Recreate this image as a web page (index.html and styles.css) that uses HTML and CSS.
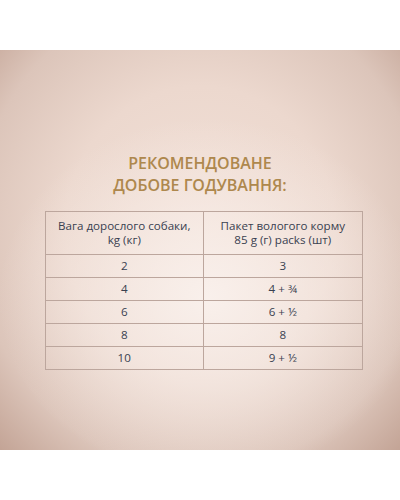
FILE: index.html
```html
<!DOCTYPE html>
<html lang="uk">
<head>
<meta charset="utf-8">
<link rel="stylesheet" href="styles.css">
</head>
<body>
<div class="banner">
  <h1 class="title">РЕКОМЕНДОВАНЕ<br>ДОБОВЕ ГОДУВАННЯ:</h1>
  <table class="feed">
    <tr class="head">
      <td>Вага дорослого собаки,<br>kg (кг)</td>
      <td>Пакет вологого корму<br>85 g (г) packs (шт)</td>
    </tr>
    <tr><td>2</td><td>3</td></tr>
    <tr><td>4</td><td>4 + ¾</td></tr>
    <tr><td>6</td><td>6 + ½</td></tr>
    <tr><td>8</td><td>8</td></tr>
    <tr><td>10</td><td>9 + ½</td></tr>
  </table>
</div>
</body>
</html>
```
FILE: styles.css
```css
html, body {
  margin: 0;
  padding: 0;
  background: #ffffff;
}
body {
  width: 400px;
  height: 500px;
  font-family: "Open Sans", "Noto Sans", sans-serif;
}
.banner {
  margin-top: 50px;
  height: 400px;
  box-sizing: border-box;
  padding-top: 102px;
  display: flex;
  flex-direction: column;
  align-items: center;
  background:
    radial-gradient(ellipse 70% 60% at 52% 62%, rgba(250,242,238,0.9) 0%, rgba(248,238,233,0.6) 35%, rgba(248,238,233,0) 75%),
    radial-gradient(ellipse 75% 80% at 50% 45%, #f2e0d7 0%, #ecd8ce 45%, #dcc5ba 75%, #c4a597 95%, #ad8b7d 110%);
}
.title {
  margin: 0;
  font-size: 16px;
  line-height: 22px;
  font-weight: 600;
  color: #ae884d;
  text-align: center;
}
.feed {
  margin-top: 15px;
  margin-left: 7px;
  width: 318px;
  border-collapse: collapse;
  font-size: 11.6px;
  color: #394150;
}
.feed td {
  border: 1px solid #bca69d;
  text-align: center;
  height: 22px;
  padding: 0;
  width: 50%;
  line-height: 14px;
}
.feed .head td {
  height: 42px;
}
```
